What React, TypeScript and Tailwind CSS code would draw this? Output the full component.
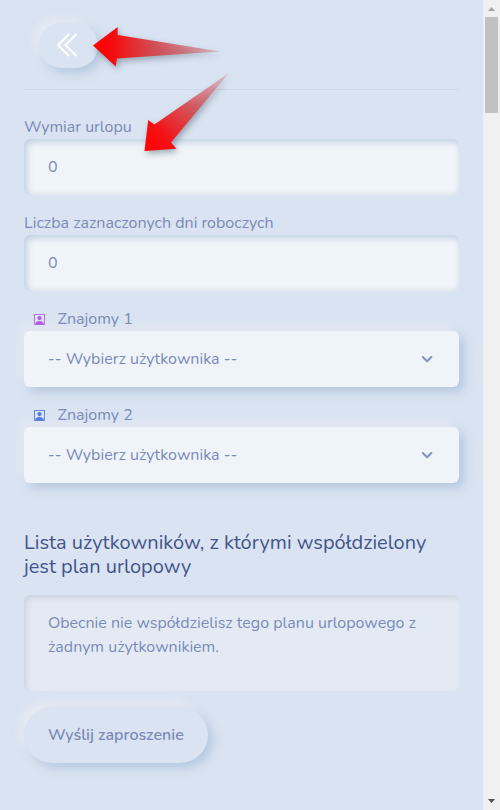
import React from 'react';

function Field({ label, value }: { label: string; value: string }) {
  return (
    <div className="mb-4">
      <label className="block h-6 leading-6">{label}</label>
      <div className="h-14 rounded-md bg-[#eff4f9] px-6 leading-[56px] shadow-[inset_3px_3px_6px_rgba(150,175,205,0.5),inset_-1px_-1px_4px_rgba(228,233,243,0.9)]">
        {value}
      </div>
    </div>
  );
}

function PersonIcon({ color }: { color: string }) {
  return (
    <svg width="11" height="11" viewBox="0 0 11 11" fill={color} className="ml-[10px] mt-px">
      <path fillRule="evenodd" d="M0 0h11v11H0zM1 1v9h9V1z" opacity=".85" />
      <circle cx="5.5" cy="4.1" r="2.05" />
      <path d="M1.4 10.5V9.4C1.4 7.8 3.4 6.9 5.5 6.9s4.1.9 4.1 2.5v1.1z" />
    </svg>
  );
}

function Select({ label, color }: { label: string; color: string }) {
  return (
    <div className="mb-4">
      <label className="flex h-6 items-center leading-6">
        <PersonIcon color={color} />
        <span className="ml-[12.5px]">{label}</span>
      </label>
      <div className="flex h-14 items-center justify-between rounded-md bg-[#eff4f9] pl-6 pr-[26px] shadow-[5px_5px_10px_rgba(150,177,210,0.5),-5px_-5px_10px_rgba(233,236,244,0.75)]">
        <span>-- Wybierz użytkownika --</span>
        <svg width="12" height="8" viewBox="0 0 12 8" fill="none" stroke="#8091c2" strokeWidth="1.9" strokeLinecap="round" strokeLinejoin="round">
          <path d="M1.8 2 6.1 6.2l4.3-4.2" />
        </svg>
      </div>
    </div>
  );
}

function Arrows() {
  return (
    <svg className="pointer-events-none absolute left-0 top-0" width="260" height="170" viewBox="0 0 260 170">
      <defs>
        <linearGradient id="first" gradientUnits="userSpaceOnUse" x1="93" y1="46" x2="220" y2="51">
          <stop offset="0" stopColor="#ff0000" />
          <stop offset=".15" stopColor="#f60a0d" />
          <stop offset=".5" stopColor="#d4464b" stopOpacity=".9" />
          <stop offset="1" stopColor="#d6525a" stopOpacity=".3" />
        </linearGradient>
        <linearGradient id="second" gradientUnits="userSpaceOnUse" x1="145" y1="151" x2="229" y2="73">
          <stop offset="0" stopColor="#ff0000" />
          <stop offset=".2" stopColor="#f50f13" />
          <stop offset=".55" stopColor="#d84a50" stopOpacity=".9" />
          <stop offset="1" stopColor="#d9707c" stopOpacity=".3" />
        </linearGradient>
      </defs>
      <g className="drop-shadow-[2px_3px_3px_rgba(40,60,80,0.4)]">
        <path d="M93 45.5 117.7 27v8L220 51.4l-103 7-1.3 8z" fill="url(#first)" />
        <path d="m144.5 151 3.7-31 6.2 4.5L229 73l-58 69.5 5.5 6.2z" fill="url(#second)" />
      </g>
    </svg>
  );
}

export default function App() {
  return (
    <div className="relative flex h-[810px] w-[500px] overflow-hidden bg-[#d9e3f1] font-['Nunito','Lato',sans-serif] text-[16px] text-[#7b8ab8]">
      <main className="w-[483px] pl-6 pr-6 pt-[23px]">
        <div className="w-[435px]">
          <button className="ml-[15px] flex h-[45px] w-[59px] items-center justify-center rounded-full bg-[#d9e3f1] shadow-[5px_5px_10px_rgba(150,177,210,0.5),-5px_-5px_10px_rgba(233,236,244,0.9)]">
            <svg width="22" height="24" viewBox="0 0 22 24" fill="none" stroke="white" strokeWidth="2.1" strokeLinecap="round" className="-ml-1 -mt-[2px]">
              <path d="M12.5 1.5 2 12l10.5 10.5M20 1.5 9.5 12 20 22.5" />
            </svg>
          </button>
          <hr className="mb-[25px] mt-[21px] w-[435px] border-t border-[#ced8e7]" />
          <Field label="Wymiar urlopu" value="0" />
          <Field label="Liczba zaznaczonych dni roboczych" value="0" />
          <Select label="Znajomy 1" color="#b45ce0" />
          <Select label="Znajomy 2" color="#5578e0" />
          <h5 className="mt-12 text-[20px] leading-6 text-[#44548a]">
            Lista użytkowników, z którymi współdzielony jest plan urlopowy
          </h5>
          <div className="mt-4 h-24 rounded-md bg-[#e4eaf4] px-6 pt-4 leading-6 shadow-[inset_3px_3px_5px_rgba(175,185,200,0.42)]">
            Obecnie nie współdzielisz tego planu urlopowego z żadnym użytkownikiem.
          </div>
          <button className="mt-4 h-14 w-[184px] whitespace-nowrap rounded-full bg-[#d9e3f1] px-6 text-left font-semibold shadow-[5px_5px_10px_rgba(150,177,210,0.5),-5px_-5px_10px_rgba(233,236,244,0.9)]">
            Wyślij zaproszenie
          </button>
        </div>
      </main>
      <aside className="flex w-[17px] flex-col items-center bg-[#f0f0f0]">
        <svg width="17" height="17" viewBox="0 0 17 17" fill="#a3a3a3"><path d="M5 11h7l-3.5-4z" /></svg>
        <div className="h-24 w-[13px] bg-[#c1c1c1]" />
        <svg className="mt-auto" width="17" height="17" viewBox="0 0 17 17" fill="#505050"><path d="M5 6h7l-3.5 4z" /></svg>
      </aside>
      <Arrows />
    </div>
  );
}
